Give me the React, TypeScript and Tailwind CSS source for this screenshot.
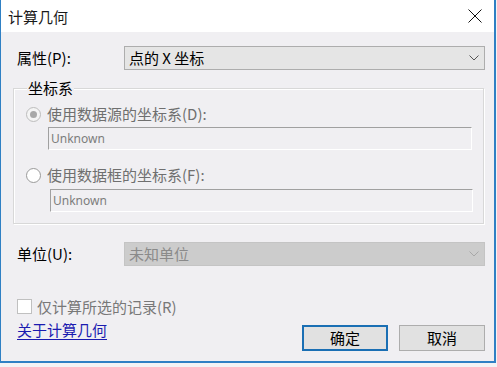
import React from "react";

const Chevron = ({ color = "#555" }: { color?: string }) => (
  <svg width="10" height="6" viewBox="0 0 10 6">
    <polyline points="0.5,0.5 5,5 9.5,0.5" fill="none" stroke={color} strokeWidth="1" />
  </svg>
);

export default function App() {
  return (
    <div className="w-[497px] h-[367px] bg-[#f3f3f5] font-['Noto_Sans_CJK_SC',sans-serif]">
      <div className="w-[496px] h-[363px] flex flex-col border-l border-r-2 border-b-2 border-[#2f80c4]">
        {/* title bar */}
        <div className="h-[32px] shrink-0 bg-white flex items-center justify-between pl-[7px] pr-[12px]">
          <span className="text-[15px] leading-[18px] text-[#1a1a1a] mt-[1px]">计算几何</span>
          <svg width="14" height="14" viewBox="0 0 14 14">
            <path d="M0.5 0.5 L13.5 13.5 M13.5 0.5 L0.5 13.5" stroke="#111" strokeWidth="1" />
          </svg>
        </div>
        {/* body */}
        <div className="flex-1 bg-[#f0eff2] flex flex-col pl-[12px] pr-[9px] pt-[14px] text-[15px] leading-[18px]">
          {/* property row */}
          <div className="flex items-center pl-[4px]">
            <span className="w-[107px] text-black">属性(P):</span>
            <div className="flex-1 h-[24px] bg-[#e5e5e5] border border-[#adadad] flex items-center justify-between pl-[4px] pr-[5px]">
              <span className="text-black">点的 X 坐标</span>
              <Chevron />
            </div>
          </div>
          {/* group box */}
          <div className="relative mt-[18px] w-[471px] h-[136px] border border-[#d8d8d8] shadow-[inset_1px_1px_0_#ffffff,1px_1px_0_#ffffff] flex flex-col pt-[17px]">
            <span className="absolute left-[13px] top-[-10px] px-[1px] bg-[#f0eff2] text-black">坐标系</span>
            <div className="flex items-center h-[16px] ml-[12px]">
              <div className="w-[15px] h-[15px] rounded-full border border-[#bdbdbd] bg-[#f4f4f4] flex items-center justify-center">
                <div className="w-[7px] h-[7px] rounded-full bg-[#a8a8a8]" />
              </div>
              <span className="ml-[6px] text-[#6f6f6f]">使用数据源的坐标系(D):</span>
            </div>
            <div className="mt-[5px] ml-[34px] w-[424px] h-[23px] border-t border-l border-[#a0a0a0] border-r border-r-white border-b border-b-white flex items-center pl-[2px] font-['Noto_Sans',sans-serif] text-[12px] text-[#7d7d7d]">
              Unknown
            </div>
            <div className="flex items-center h-[16px] ml-[12px] mt-[17px]">
              <div className="w-[15px] h-[15px] rounded-full border border-[#9a9a9a] bg-white" />
              <span className="ml-[6px] text-[#6f6f6f]">使用数据框的坐标系(F):</span>
            </div>
            <div className="mt-[6px] ml-[36px] w-[423px] h-[23px] border-t border-l border-[#a0a0a0] border-r border-r-white border-b border-b-white flex items-center pl-[2px] font-['Noto_Sans',sans-serif] text-[12px] text-[#7d7d7d]">
              Unknown
            </div>
          </div>
          {/* unit row */}
          <div className="flex items-center pl-[4px] mt-[18px]">
            <span className="w-[107px] text-black">单位(U):</span>
            <div className="flex-1 h-[24px] bg-[#cccccc] border border-[#c4c4c4] flex items-center justify-between pl-[4px] pr-[5px]">
              <span className="text-[#8a8a8a]">未知单位</span>
              <Chevron color="#a8a8a8" />
            </div>
          </div>
          {/* checkbox */}
          <div className="flex items-center pl-[4px] mt-[33px] h-[15px]">
            <div className="w-[15px] h-[15px] bg-white border border-[#c0c0c0]" />
            <span className="ml-[5px] text-[#787878]">仅计算所选的记录(R)</span>
          </div>
          {/* bottom row */}
          <div className="flex justify-between items-start mt-[7px] pl-[4px]">
            <span className="text-[#1b1bb0] underline underline-offset-[3px]">关于计算几何</span>
            <div className="flex gap-[11px] mt-[4px]">
              <button className="w-[86px] h-[26px] bg-[#e1e1e1] border-2 border-[#1a6fb4] flex items-center justify-center text-black">确定</button>
              <button className="w-[86px] h-[26px] bg-[#e1e1e1] border border-[#adadad] flex items-center justify-center text-black">取消</button>
            </div>
          </div>
        </div>
      </div>
    </div>
  );
}
